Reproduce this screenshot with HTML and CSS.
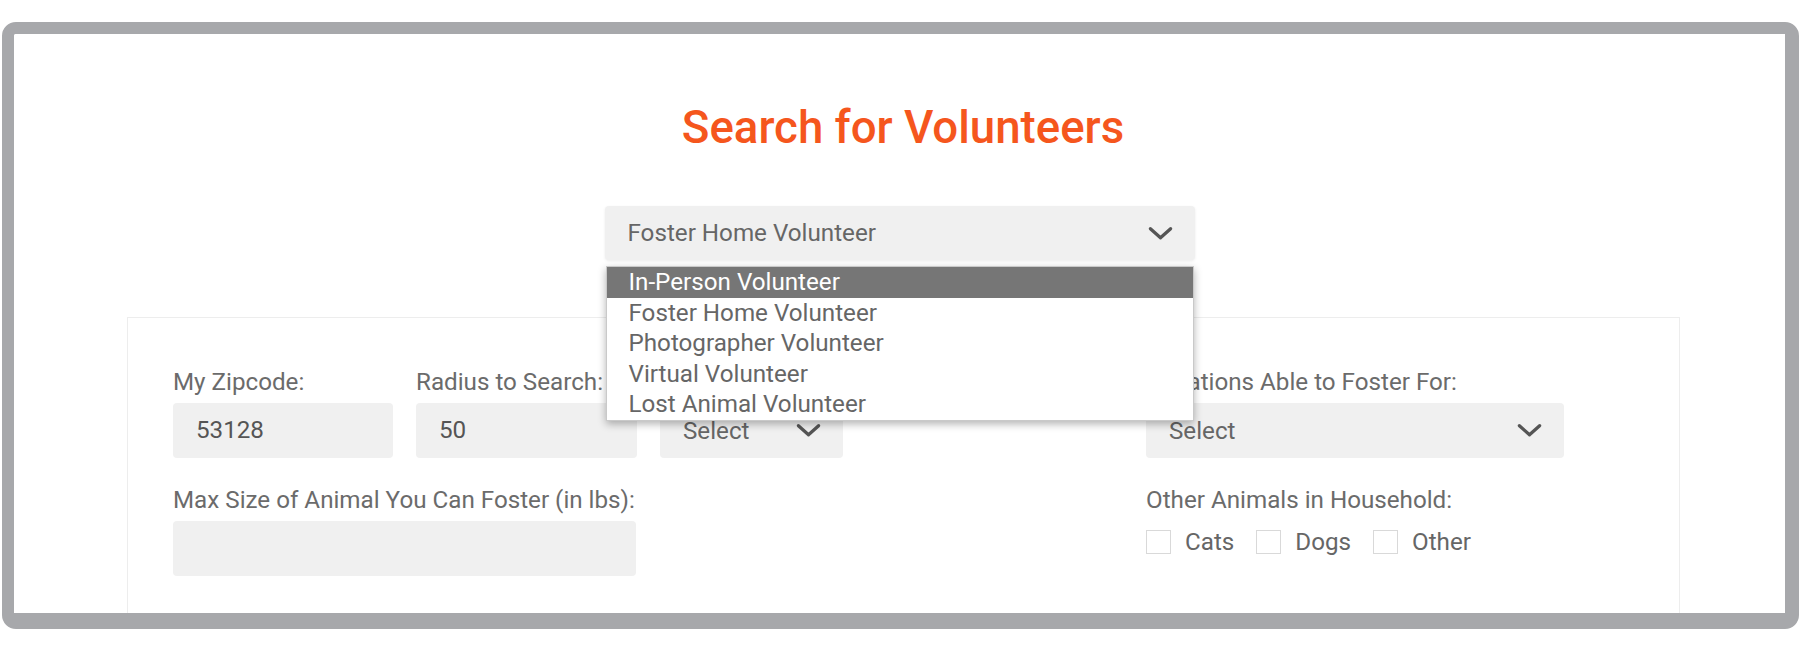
FILE: index.html
```html
<!DOCTYPE html>
<html lang="en">

<head>
	<meta charset="UTF-8" />
	<meta name="viewport" content="width=device-width, initial-scale=1.0" />
	<title>Search for Volunteers</title>
	<link rel="stylesheet" href="styles.css">
</head>

<body>
	<div class="frame">
		<div class="screen">
			<h1 class="title">Search for Volunteers</h1>

			<div class="type-picker">
				<div class="select select-type">
					<span>Foster Home Volunteer</span>
					<svg class="chev" viewBox="0 0 26 15"><polyline points="2.5,2.5 13,12 23.5,2.5" /></svg>
				</div>
				<ul class="type-list">
					<li class="active">In-Person Volunteer</li>
					<li>Foster Home Volunteer</li>
					<li>Photographer Volunteer</li>
					<li>Virtual Volunteer</li>
					<li>Lost Animal Volunteer</li>
				</ul>
			</div>

			<div class="card">
				<div class="row">
					<div class="group">
						<div class="field zip">
							<label>My Zipcode:</label>
							<div class="input">53128</div>
						</div>
						<div class="field radius">
							<label>Radius to Search:</label>
							<div class="input">50</div>
						</div>
						<div class="field gender">
							<label>&nbsp;</label>
							<div class="select">
								<span>Select</span>
								<svg class="chev" viewBox="0 0 26 15"><polyline points="2.5,2.5 13,12 23.5,2.5" /></svg>
							</div>
						</div>
					</div>
					<div class="field side">
						<label>Situations Able to Foster For:</label>
						<div class="select">
							<span>Select</span>
							<svg class="chev" viewBox="0 0 26 15"><polyline points="2.5,2.5 13,12 23.5,2.5" /></svg>
						</div>
					</div>
				</div>

				<div class="row">
					<div class="field size">
						<label>Max Size of Animal You Can Foster (in lbs):</label>
						<div class="input"></div>
					</div>
					<div class="field side">
						<label>Other Animals in Household:</label>
						<div class="checks">
							<span class="check"><i class="box"></i>Cats</span>
							<span class="check"><i class="box"></i>Dogs</span>
							<span class="check"><i class="box"></i>Other</span>
						</div>
					</div>
				</div>

				<div class="notes"></div>
			</div>
		</div>
	</div>
</body>

</html>
```

FILE: styles.css
```css
* {
	box-sizing: border-box;
}

body {
	margin: 0;
	background: #fff;
	font-family: Roboto, "Liberation Sans", sans-serif;
	color: #666;
}

/* grey device frame round the shot */
.frame {
	margin: 22px 1px 21px 2px;
	height: 607px;
	border: solid #a7a8ab;
	border-width: 12px 14px 16px 12px;
	border-radius: 14px;
	overflow: hidden;
}

.screen {
	height: 100%;
	padding-top: 67px;
	background: #fff;
	overflow: hidden;
}

.title {
	margin: 0;
	padding-left: 7px;
	text-align: center;
	font-size: 45.6px;
	font-weight: 500;
	line-height: 54px;
	color: #f5561d;
}

.type-picker {
	position: relative;
	width: 590px;
	margin: 51px auto 0;
	z-index: 2;
}

.select {
	display: flex;
	align-items: center;
	justify-content: space-between;
	height: 55px;
	padding: 0 22px 0 23px;
	background: #f0f0f0;
	border-radius: 4px;
	font-size: 24.2px;
	color: #666;
}

.select-type {
	height: 54px;
	padding-left: 23px;
	box-shadow: 0 1px 3px rgba(0, 0, 0, 0.08);
}

.chev {
	width: 25px;
	height: 15px;
	fill: none;
	stroke: #555;
	stroke-width: 3.4;
	stroke-linecap: round;
	stroke-linejoin: round;
}

.type-list {
	position: absolute;
	top: calc(100% + 6px);
	left: 1px;
	right: 1px;
	margin: 0;
	padding: 0;
	list-style: none;
	background: #fff;
	border: 1px solid #c9c9c9;
	box-shadow: 0 3px 8px rgba(0, 0, 0, 0.3);
}

.type-list li {
	height: 30.6px;
	line-height: 30.6px;
	padding-left: 22px;
	font-size: 24.2px;
	color: #666;
	white-space: nowrap;
}

.type-list li.active {
	background: #767676;
	color: #fff;
}

.card {
	width: 1553px;
	margin: 57px 0 0 113px;
	padding: 50px 115px 0 45px;
	border: 1px solid #ededed;
	border-bottom: none;
	height: 400px;
}

.row {
	display: flex;
	justify-content: space-between;
	align-items: flex-start;
}

.row + .row {
	margin-top: 28px;
}

.group {
	display: flex;
	gap: 23px;
}

.field label {
	display: block;
	font-size: 24.2px;
	line-height: 28px;
	margin-bottom: 7px;
	color: #6b6b6b;
	white-space: nowrap;
}

.input {
	height: 55px;
	padding: 0 23px;
	background: #f0f0f0;
	border-radius: 4px;
	font-size: 24.2px;
	line-height: 55px;
	color: #555;
}

.zip {
	width: 220px;
}

.radius {
	width: 221px;
}

.gender {
	width: 183px;
}

.side {
	width: 418px;
}

.size {
	width: 463px;
}

.checks {
	display: flex;
	align-items: center;
	margin-top: 16px;
	gap: 22px;
}

.check {
	display: flex;
	align-items: center;
	gap: 14px;
	font-size: 24.2px;
	line-height: 24px;
	color: #666;
}

.box {
	width: 25px;
	height: 24px;
	border: 1px solid #d9d9d9;
	background: #fff;
}

.notes {
	width: 1460px;
	height: 80px;
	margin-top: 37px;
	background: #f0f0f0;
	border-radius: 4px;
}
```
